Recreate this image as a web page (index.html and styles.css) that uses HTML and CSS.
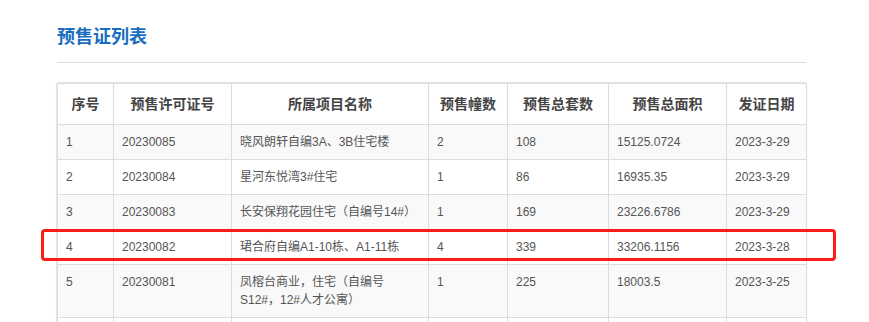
FILE: index.html
```html
<!DOCTYPE html>
<html lang="zh-CN">
<head>
<meta charset="utf-8">
<title>预售证列表</title>
<link rel="stylesheet" href="styles.css">
</head>
<body>
<div class="page">
  <h2 class="title">预售证列表</h2>
  <div class="table-wrap">
    <table class="list">
      <colgroup>
        <col class="c-no"><col class="c-permit"><col class="c-name"><col class="c-bld"><col class="c-sets"><col class="c-area"><col class="c-date">
      </colgroup>
      <thead>
        <tr><th>序号</th><th>预售许可证号</th><th>所属项目名称</th><th>预售幢数</th><th>预售总套数</th><th>预售总面积</th><th>发证日期</th></tr>
      </thead>
      <tbody>
        <tr><td>1</td><td>20230085</td><td>晓风朗轩自编3A、3B住宅楼</td><td>2</td><td>108</td><td>15125.0724</td><td>2023-3-29</td></tr>
        <tr><td>2</td><td>20230084</td><td>星河东悦湾3#住宅</td><td>1</td><td>86</td><td>16935.35</td><td>2023-3-29</td></tr>
        <tr><td>3</td><td>20230083</td><td>长安保翔花园住宅（自编号14#）</td><td>1</td><td>169</td><td>23226.6786</td><td>2023-3-29</td></tr>
        <tr><td>4</td><td>20230082</td><td>珺合府自编A1-10栋、A1-11栋</td><td>4</td><td>339</td><td>33206.1156</td><td>2023-3-28</td></tr>
        <tr><td>5</td><td>20230081</td><td>凤榕台商业，住宅（自编号S12#，12#人才公寓）</td><td>1</td><td>225</td><td>18003.5</td><td>2023-3-25</td></tr>
        <tr><td>&nbsp;</td><td>&nbsp;</td><td>&nbsp;</td><td>&nbsp;</td><td>&nbsp;</td><td>&nbsp;</td><td>&nbsp;</td></tr>
      </tbody>
    </table>
    <div class="highlight"></div>
  </div>
</div>
</body>
</html>
```
FILE: styles.css
```css
html, body {
  margin: 0;
  padding: 0;
  background: #fff;
  overflow: hidden;
}
body {
  font-family: "Liberation Sans", "Noto Sans CJK SC", sans-serif;
  color: #555;
}
.page {
  width: 749px;
  padding: 25px 0 0 57px;
}
.title {
  margin: 0;
  font-size: 18px;
  line-height: 24px;
  font-weight: bold;
  color: #1a6dbe;
  padding-bottom: 13px;
  border-bottom: 1px solid #dcdcdc;
}
.table-wrap {
  position: relative;
  margin-top: 20px;
  border-radius: 3px;
  box-shadow: 0 0 0 1px #e6e6e6, 0 0 2px 1px rgba(0,0,0,0.06);
}
.list {
  width: 749px;
  table-layout: fixed;
  border-collapse: collapse;
  font-size: 12px;
}
.c-no { width: 56px; }
.c-permit { width: 118px; }
.c-name { width: 197px; }
.c-bld { width: 79px; }
.c-sets { width: 101px; }
.c-area { width: 118px; }
.c-date { width: 80px; }
.list th, .list td {
  border: 1px solid #dcdcdc;
  text-align: left;
  vertical-align: top;
}
.list th {
  font-size: 14px;
  font-weight: bold;
  color: #444;
  text-align: center;
  line-height: 20px;
  padding: 10px 4px;
  background: #fff;
}
.list td {
  line-height: 18px;
  padding: 8px 8px;
  color: #555;
}
.list tbody tr:nth-child(odd) td {
  background: #f9f9f9;
}
.list tbody tr:nth-child(even) td {
  background: #fff;
}
.highlight {
  position: absolute;
  left: -16px;
  top: 146px;
  width: 789px;
  height: 26px;
  border: 3px solid #fb1d17;
  border-radius: 4px;
  pointer-events: none;
}
```
